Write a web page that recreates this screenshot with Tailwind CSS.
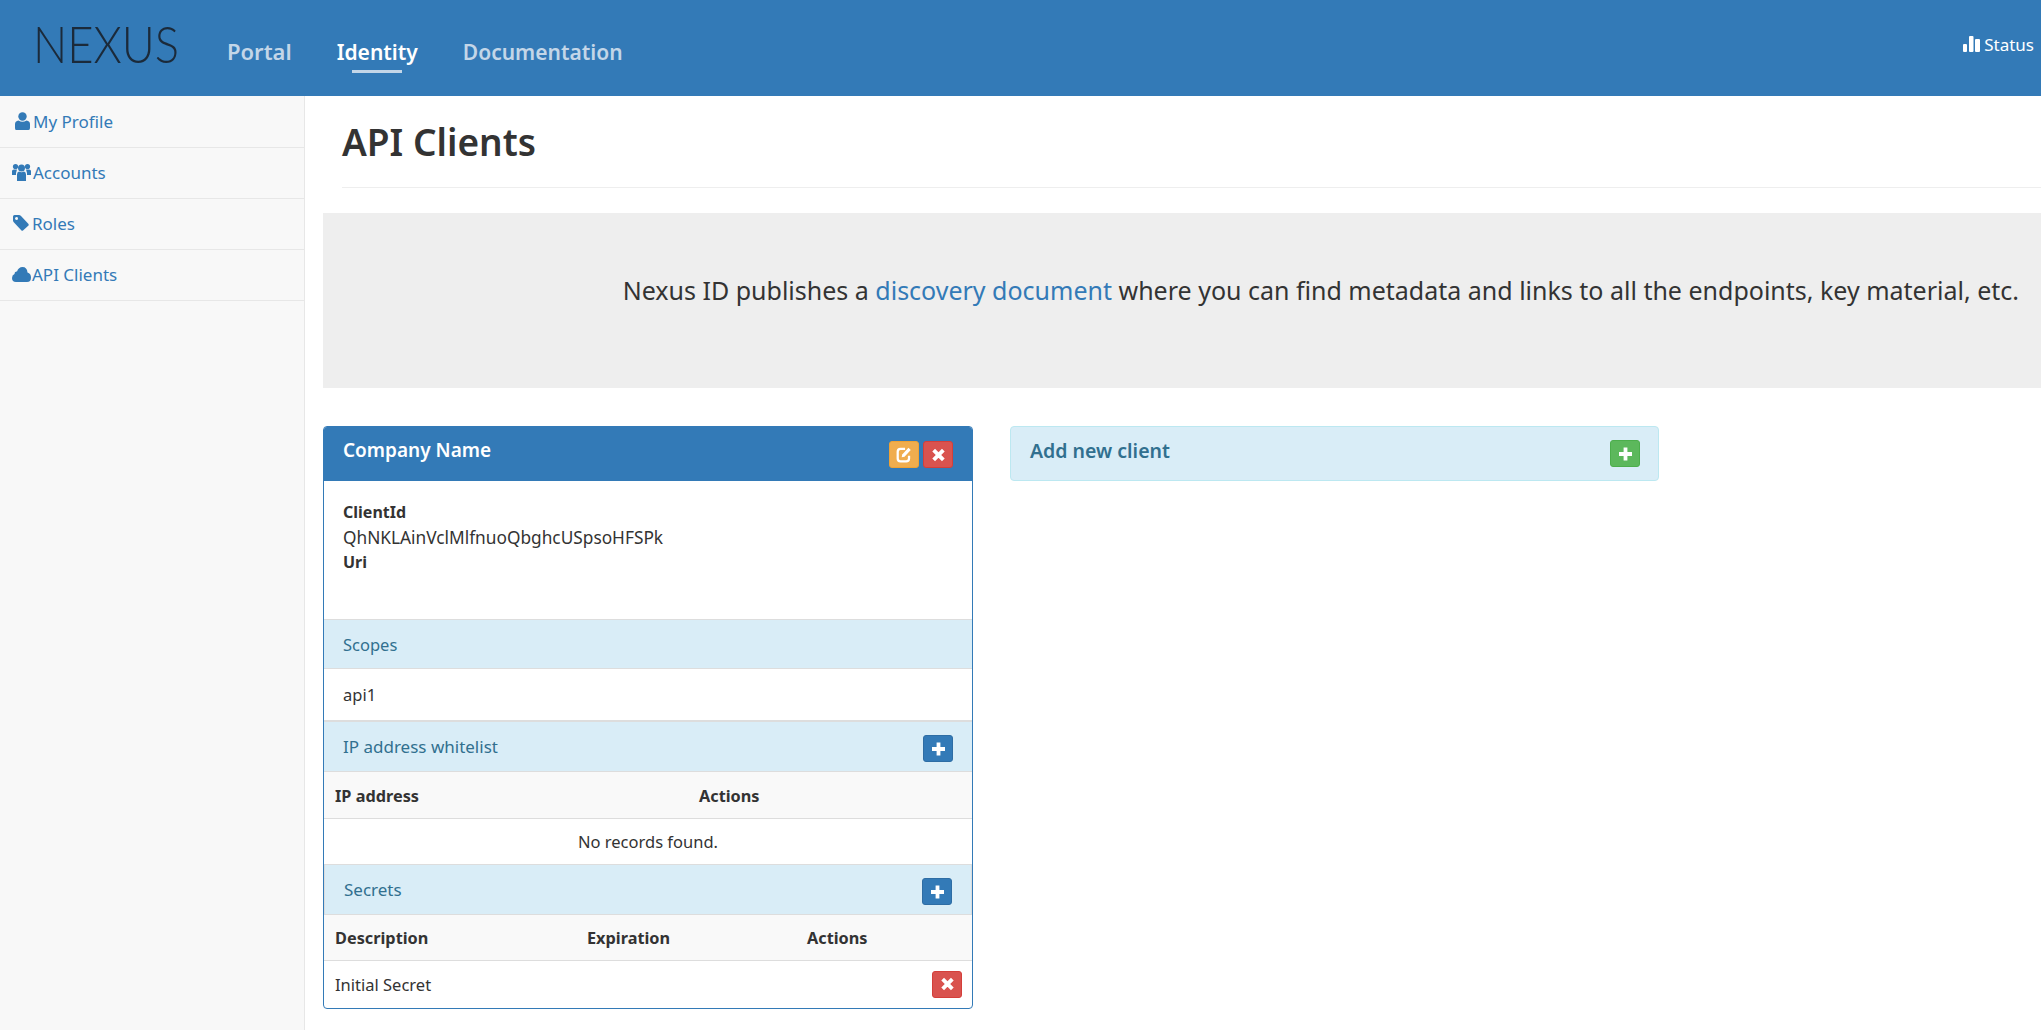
<!DOCTYPE html>
<html lang="en">
<head>
    <meta charset="UTF-8">
    <title>API Clients</title>
    <script src="https://cdn.jsdelivr.net/npm/@tailwindcss/browser@4"></script>
</head>
<body class="bg-white text-[#333] font-['Noto_Sans',sans-serif] text-[16.5px] leading-[25px] h-[1030px] overflow-hidden flex flex-col">

    <!-- top bar -->
    <header class="bg-[#337ab7] h-[96px] shrink-0 flex">
        <div class="w-[227px] pl-[33px] pt-[12px]">
            <span class="inline-block origin-left scale-x-[0.89] font-['Lato',sans-serif] font-light text-[51px] leading-[64px] text-[#1b2a3a]">NEXUS</span>
        </div>
        <nav class="flex text-[21px] font-semibold">
            <a class="pt-[39px] text-[#c3d6e8] text-[22px] mr-[45px]">Portal</a>
            <a class="pt-[40px] text-white relative mr-[45px]">Identity<span class="absolute left-[15px] top-[70px] w-[50px] h-[3px] bg-[#c3d6e8]"></span></a>
            <a class="pt-[40px] text-[#c3d6e8]">Documentation</a>
        </nav>
        <div class="ml-auto pr-[7px] pt-[32px] flex items-start gap-[3px] text-white text-[17px]">
            <svg class="mt-[4px]" width="18" height="16" viewBox="0 0 18 16" fill="#fff"><rect x="0" y="8" width="4" height="8" rx="1"/><rect x="6" y="0" width="4.500" height="16" rx="1"/><rect x="12" y="3" width="5" height="13" rx="1"/></svg>
            <span>Status</span>
        </div>
    </header>

    <div class="flex flex-1 min-h-0">
        <!-- side menu -->
        <aside class="w-[305px] shrink-0 pt-[1px] bg-[#f8f8f8] border-r border-[#e7e7e7] text-[#337ab7] text-[17px]">
            <a class="flex h-[51px] border-b border-[#e7e7e7] items-center pl-[15px] gap-[3px] pb-[2px]">
                <svg width="15" height="18" viewBox="0 0 15 18" fill="#337ab7"><circle cx="7.500" cy="4.500" r="4.200"/><path d="M1 18 Q0 18 0 16 L0 12 Q0 9 3.500 8.500 Q7.500 11 11.500 8.500 Q15 9 15 12 L15 16 Q15 18 13.500 18Z"/></svg>
                <span>My Profile</span>
            </a>
            <a class="flex h-[51px] border-b border-[#e7e7e7] items-center pl-[12px] gap-[2px] pb-[2px]">
                <svg width="19" height="18" viewBox="0 0 19 18" fill="#337ab7"><circle cx="3.500" cy="3.500" r="2.600"/><circle cx="15.500" cy="3.500" r="2.600"/><circle cx="9.500" cy="5" r="3.500"/><path d="M0 12 L0 8 Q0 6.500 2 6.500 L5 6.500 L4 10 L4 12Z"/><path d="M19 12 L19 8 Q19 6.500 17 6.500 L14 6.500 L15 10 L15 12Z"/><path d="M5 18 L5 11.500 Q5 9 7 8.500 Q9.500 10 12 8.500 Q14 9 14 11.500 L14 18Z"/></svg>
                <span>Accounts</span>
            </a>
            <a class="flex h-[51px] border-b border-[#e7e7e7] items-center pl-[13px] gap-[3px] pb-[2px]">
                <svg width="16" height="16" viewBox="0 0 16 16"><path fill="#337ab7" fill-rule="evenodd" d="M0 1.500 Q0 0 1.500 0 L6 0 Q7 0 8 1 L15.500 9 Q16 10 15.500 10.500 L10 15.500 Q9 16 8.500 15.500 L1 7.500 Q0 6.500 0 5.500Z M3.500 2 A1.500 1.500 0 1 0 3.510 5 A1.500 1.500 0 1 0 3.500 2Z"/></svg>
                <span>Roles</span>
            </a>
            <a class="flex h-[51px] border-b border-[#e7e7e7] items-center pl-[12px] gap-[1px] pb-[2px]">
                <svg width="19" height="15" viewBox="0 0 19 15" fill="#337ab7"><path d="M4 15 Q0 15 0 11 Q0 8 2.500 7 Q2.500 4 5 4.500 Q6.500 0 10.500 0 Q15 0 15.500 5.500 Q19 6.500 19 10.500 Q19 15 15 15Z"/></svg>
                <span>API Clients</span>
            </a>
        </aside>

        <main class="flex-1 min-w-0 pl-[18px]">
            <div class="ml-[19px] h-[92px] border-b border-[#eee] pt-[24px]">
                <h1 class="text-[37px] leading-[44px] font-semibold">API Clients</h1>
            </div>

            <div class="mt-[25px] bg-[#eee] h-[175px] flex items-center justify-end pr-[22px] text-[25px] pb-[20px]">
                <p>Nexus ID publishes a <a class="text-[#337ab7]">discovery document</a> where you can find metadata and links to all the endpoints, key material, etc.</p>
            </div>

            <div class="flex items-start gap-[37px] mt-[38px]">
                <!-- client card -->
                <section class="w-[650px] h-[583px] shrink-0 border border-[#337ab7] rounded-[4px] overflow-hidden">
                    <div class="h-[54px] bg-[#337ab7] flex justify-between pl-[19px] pr-[19px] pt-[11px] text-white">
                        <h3 class="text-[19px] font-semibold">Company Name</h3>
                        <div class="flex gap-[4px] pt-[3px]">
                            <button class="w-[30px] h-[27px] bg-[#f0ad4e] border border-[#eea236] rounded-[3px] flex items-center justify-center">
                                <svg width="17" height="17" viewBox="0 0 15 15"><path d="M11.500 8.500 V11 Q11.500 13.500 9 13.500 H4 Q1.500 13.500 1.500 11 V5 Q1.500 2.500 4 2.500 H8" fill="none" stroke="#fff" stroke-width="2"/><path d="M5 10 L5.500 7.500 L11 1.500 L13 3.500 L7.500 9.500Z" fill="#fff"/></svg>
                            </button>
                            <button class="w-[30px] h-[27px] bg-[#d9534f] border border-[#d43f3a] rounded-[3px] flex items-center justify-center">
                                <svg width="15" height="14" viewBox="0 0 13 13"><path d="M2 2 L11 11 M11 2 L2 11" stroke="#fff" stroke-width="3.600"/></svg>
                            </button>
                        </div>
                    </div>
                    <div class="h-[138px] pl-[19px] pt-[19px]">
                        <div class="font-bold text-[16px]">ClientId</div>
                        <div class="text-[17.3px]">QhNKLAinVclMlfnuoQbghcUSpsoHFSPk</div>
                        <div class="font-bold text-[16px]">Uri</div>
                    </div>
                    <div class="h-[50px] bg-[#d9edf7] text-[#31708f] border-t border-[#ddd] border-b pl-[19px] flex items-center">Scopes</div>
                    <div class="h-[51px] pl-[19px] flex items-center">api1</div>
                    <div class="h-[52px] bg-[#d9edf7] text-[#31708f] border-t-2 border-b border-[#ddd] pl-[19px] pr-[19px] flex items-center justify-between text-[17px]">
                        <span class="pb-[1px]">IP address whitelist</span>
                        <button class="mt-[4px] w-[30px] h-[27px] bg-[#337ab7] border border-[#2e6da4] rounded-[3px] flex items-center justify-center">
                            <svg width="15" height="14" viewBox="0 0 14 14"><path d="M7 0.500 V13.500 M0.500 7 H13.500" stroke="#fff" stroke-width="3.800"/></svg>
                        </button>
                    </div>
                    <table class="w-full table-fixed">
                        <colgroup><col class="w-[364px]"><col></colgroup>
                        <tr class="h-[46px] bg-[#f9f9f9] border-b border-[#ddd] text-left text-[16.3px]">
                            <th class="pl-[11px] pt-[3px] font-bold">IP address</th>
                            <th class="pl-[11px] pt-[3px] font-bold">Actions</th>
                        </tr>
                        <tr class="h-[46px]">
                            <td colspan="2" class="text-center">No records found.</td>
                        </tr>
                    </table>
                    <div class="h-[51px] bg-[#d9edf7] text-[#31708f] border border-[#ddd] pl-[19px] pr-[19px] flex items-center justify-between text-[17px]">
                        <span class="pb-[1px]">Secrets</span>
                        <button class="mt-[4px] w-[30px] h-[27px] bg-[#337ab7] border border-[#2e6da4] rounded-[3px] flex items-center justify-center">
                            <svg width="15" height="14" viewBox="0 0 14 14"><path d="M7 0.500 V13.500 M0.500 7 H13.500" stroke="#fff" stroke-width="3.800"/></svg>
                        </button>
                    </div>
                    <table class="w-full table-fixed">
                        <colgroup><col class="w-[252px]"><col class="w-[220px]"><col></colgroup>
                        <tr class="h-[45px] bg-[#f9f9f9] border-b border-[#ddd] text-left text-[16.3px]">
                            <th class="pl-[11px] pt-[2px] font-bold">Description</th>
                            <th class="pl-[11px] pt-[2px] font-bold">Expiration</th>
                            <th class="pl-[11px] pt-[2px] font-bold">Actions</th>
                        </tr>
                        <tr class="h-[48px]">
                            <td class="pl-[11px]">Initial Secret</td>
                            <td></td>
                            <td class="pr-[10px]">
                                <button class="ml-auto w-[30px] h-[27px] bg-[#d9534f] border border-[#d43f3a] rounded-[3px] flex items-center justify-center">
                                    <svg width="15" height="14" viewBox="0 0 13 13"><path d="M2 2 L11 11 M11 2 L2 11" stroke="#fff" stroke-width="3.600"/></svg>
                                </button>
                            </td>
                        </tr>
                    </table>
                </section>

                <!-- add new client -->
                <section class="w-[649px] h-[55px] shrink-0 bg-[#d9edf7] border border-[#bce8f1] rounded-[4px] flex justify-between pl-[19px] pr-[18px] pt-[11px] text-[#31708f]">
                    <h3 class="text-[19.5px] font-semibold">Add new client</h3>
                    <button class="mt-[2px] w-[30px] h-[27px] bg-[#5cb85c] border border-[#4cae4c] rounded-[3px] flex items-center justify-center">
                        <svg width="15" height="14" viewBox="0 0 14 14"><path d="M7 0.500 V13.500 M0.500 7 H13.500" stroke="#fff" stroke-width="3.800"/></svg>
                    </button>
                </section>
            </div>
        </main>
    </div>

</body>
</html>
